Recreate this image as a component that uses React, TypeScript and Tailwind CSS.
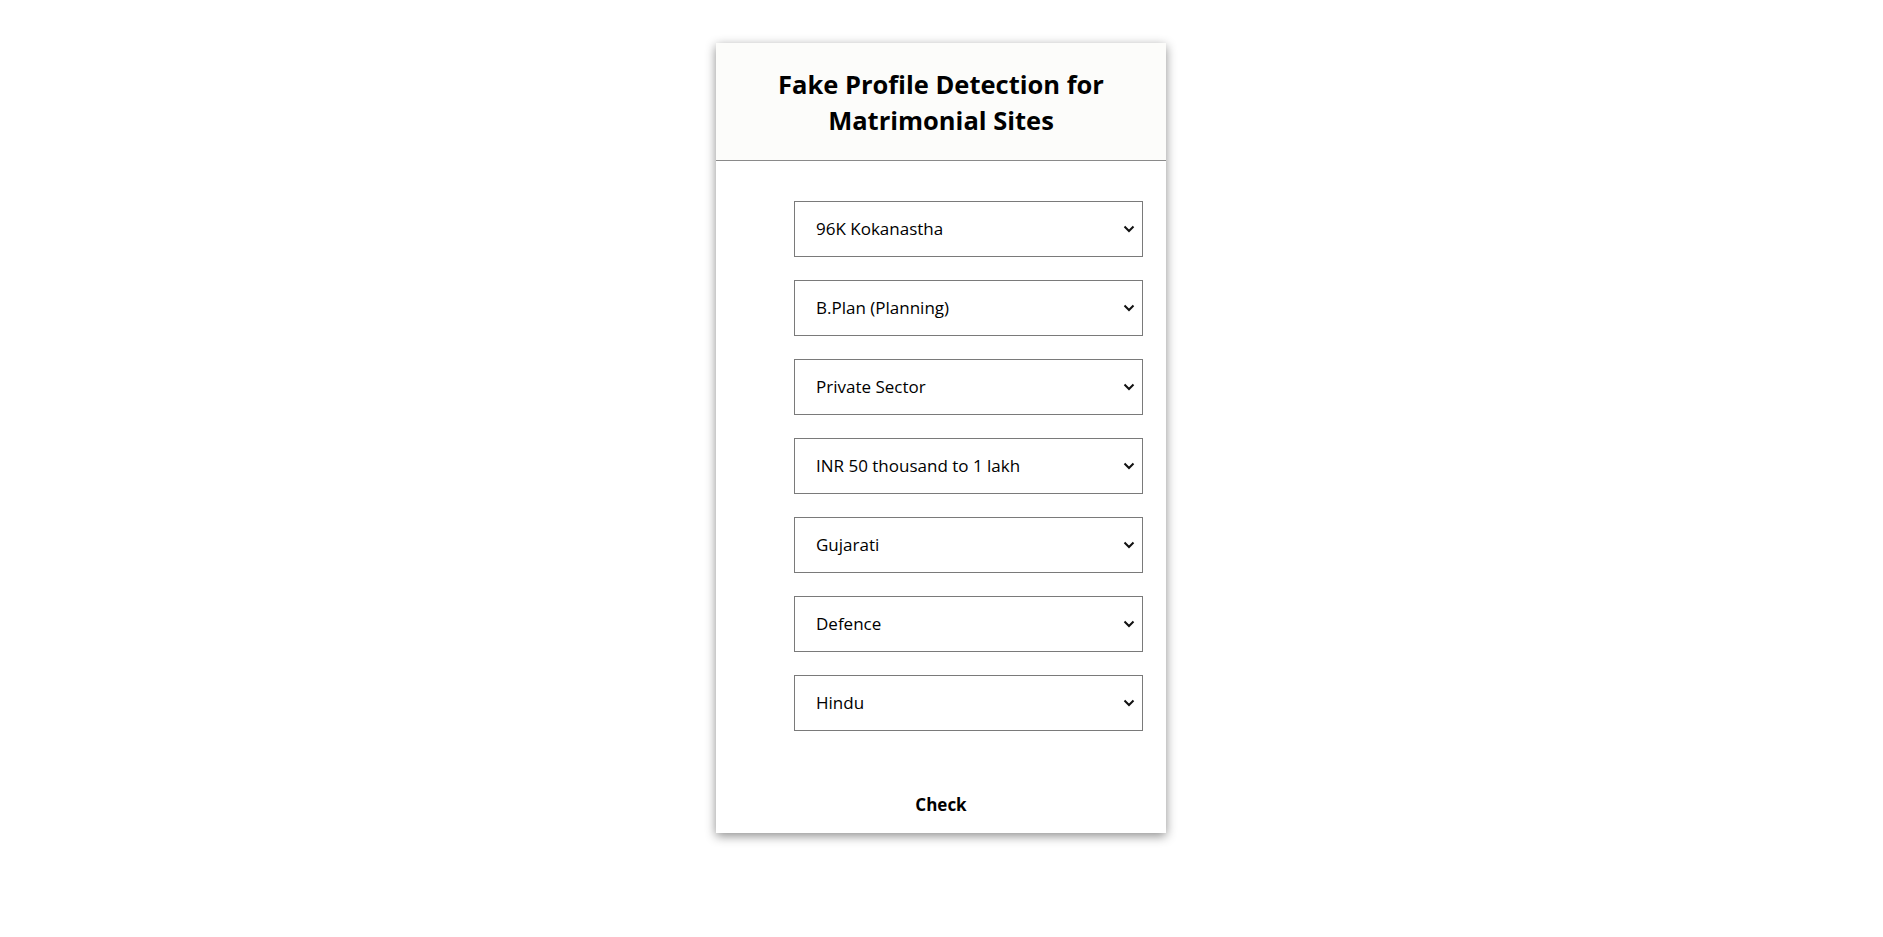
import React, { useState } from "react";

type Field = {
  name: string;
  options: string[];
};

const fields: Field[] = [
  { name: "caste", options: ["96K Kokanastha", "Brahmin", "Maratha"] },
  { name: "education", options: ["B.Plan (Planning)", "B.Tech", "MBA"] },
  { name: "occupation", options: ["Private Sector", "Government", "Business"] },
  { name: "income", options: ["INR 50 thousand to 1 lakh", "INR 1 lakh to 2 lakh"] },
  { name: "mother_tongue", options: ["Gujarati", "Marathi", "Hindi"] },
  { name: "profession", options: ["Defence", "Engineering", "Medical"] },
  { name: "religion", options: ["Hindu", "Muslim", "Christian"] },
];

function Chevron() {
  return (
    <svg
      className="pointer-events-none absolute right-[8px] top-1/2 -translate-y-1/2"
      width="12"
      height="8"
      viewBox="0 0 12 8"
      fill="none"
    >
      <path d="M1.5 1.5L6 6L10.5 1.5" stroke="#111" strokeWidth="2" />
    </svg>
  );
}

function App() {
  const [values, setValues] = useState<{ [key: string]: string }>(() => {
    const init: { [key: string]: string } = {};
    fields.forEach((f) => (init[f.name] = f.options[0]));
    return init;
  });

  return (
    <div className="min-h-screen bg-white pt-[43px] font-['Open_Sans','Noto_Sans',sans-serif] text-black">
      <div className="ml-[716px] w-[450px] bg-white shadow-[0_3px_10px_rgba(0,0,0,0.45)]">
        <div className="flex h-[118px] items-center justify-center border-b border-[#8a8a8a] bg-[#fcfcfa] px-10">
          <h1 className="text-center text-[25.5px] font-bold leading-[36px]">
            Fake Profile Detection for Matrimonial Sites
          </h1>
        </div>
        <form
          className="flex flex-col pb-[16px] pl-[78px] pr-[23px] pt-[40px]"
          onSubmit={(e) => e.preventDefault()}
        >
          <div className="flex flex-col gap-[23px]">
            {fields.map((f) => (
              <div className="relative" key={f.name}>
                <select
                  className="h-[56px] w-full appearance-none border border-[#7a7a7a] bg-white pl-[21px] pr-8 text-[17px] text-black outline-none"
                  value={values[f.name]}
                  onChange={(e) => setValues({ ...values, [f.name]: e.target.value })}
                >
                  {f.options.map((o) => (
                    <option key={o}>{o}</option>
                  ))}
                </select>
                <Chevron />
              </div>
            ))}
          </div>
          <button
            type="submit"
            className="-ml-[55px] mt-[62px] self-center text-[17px] font-bold leading-[24px]"
          >
            Check
          </button>
        </form>
      </div>
    </div>
  );
}

export default App;
